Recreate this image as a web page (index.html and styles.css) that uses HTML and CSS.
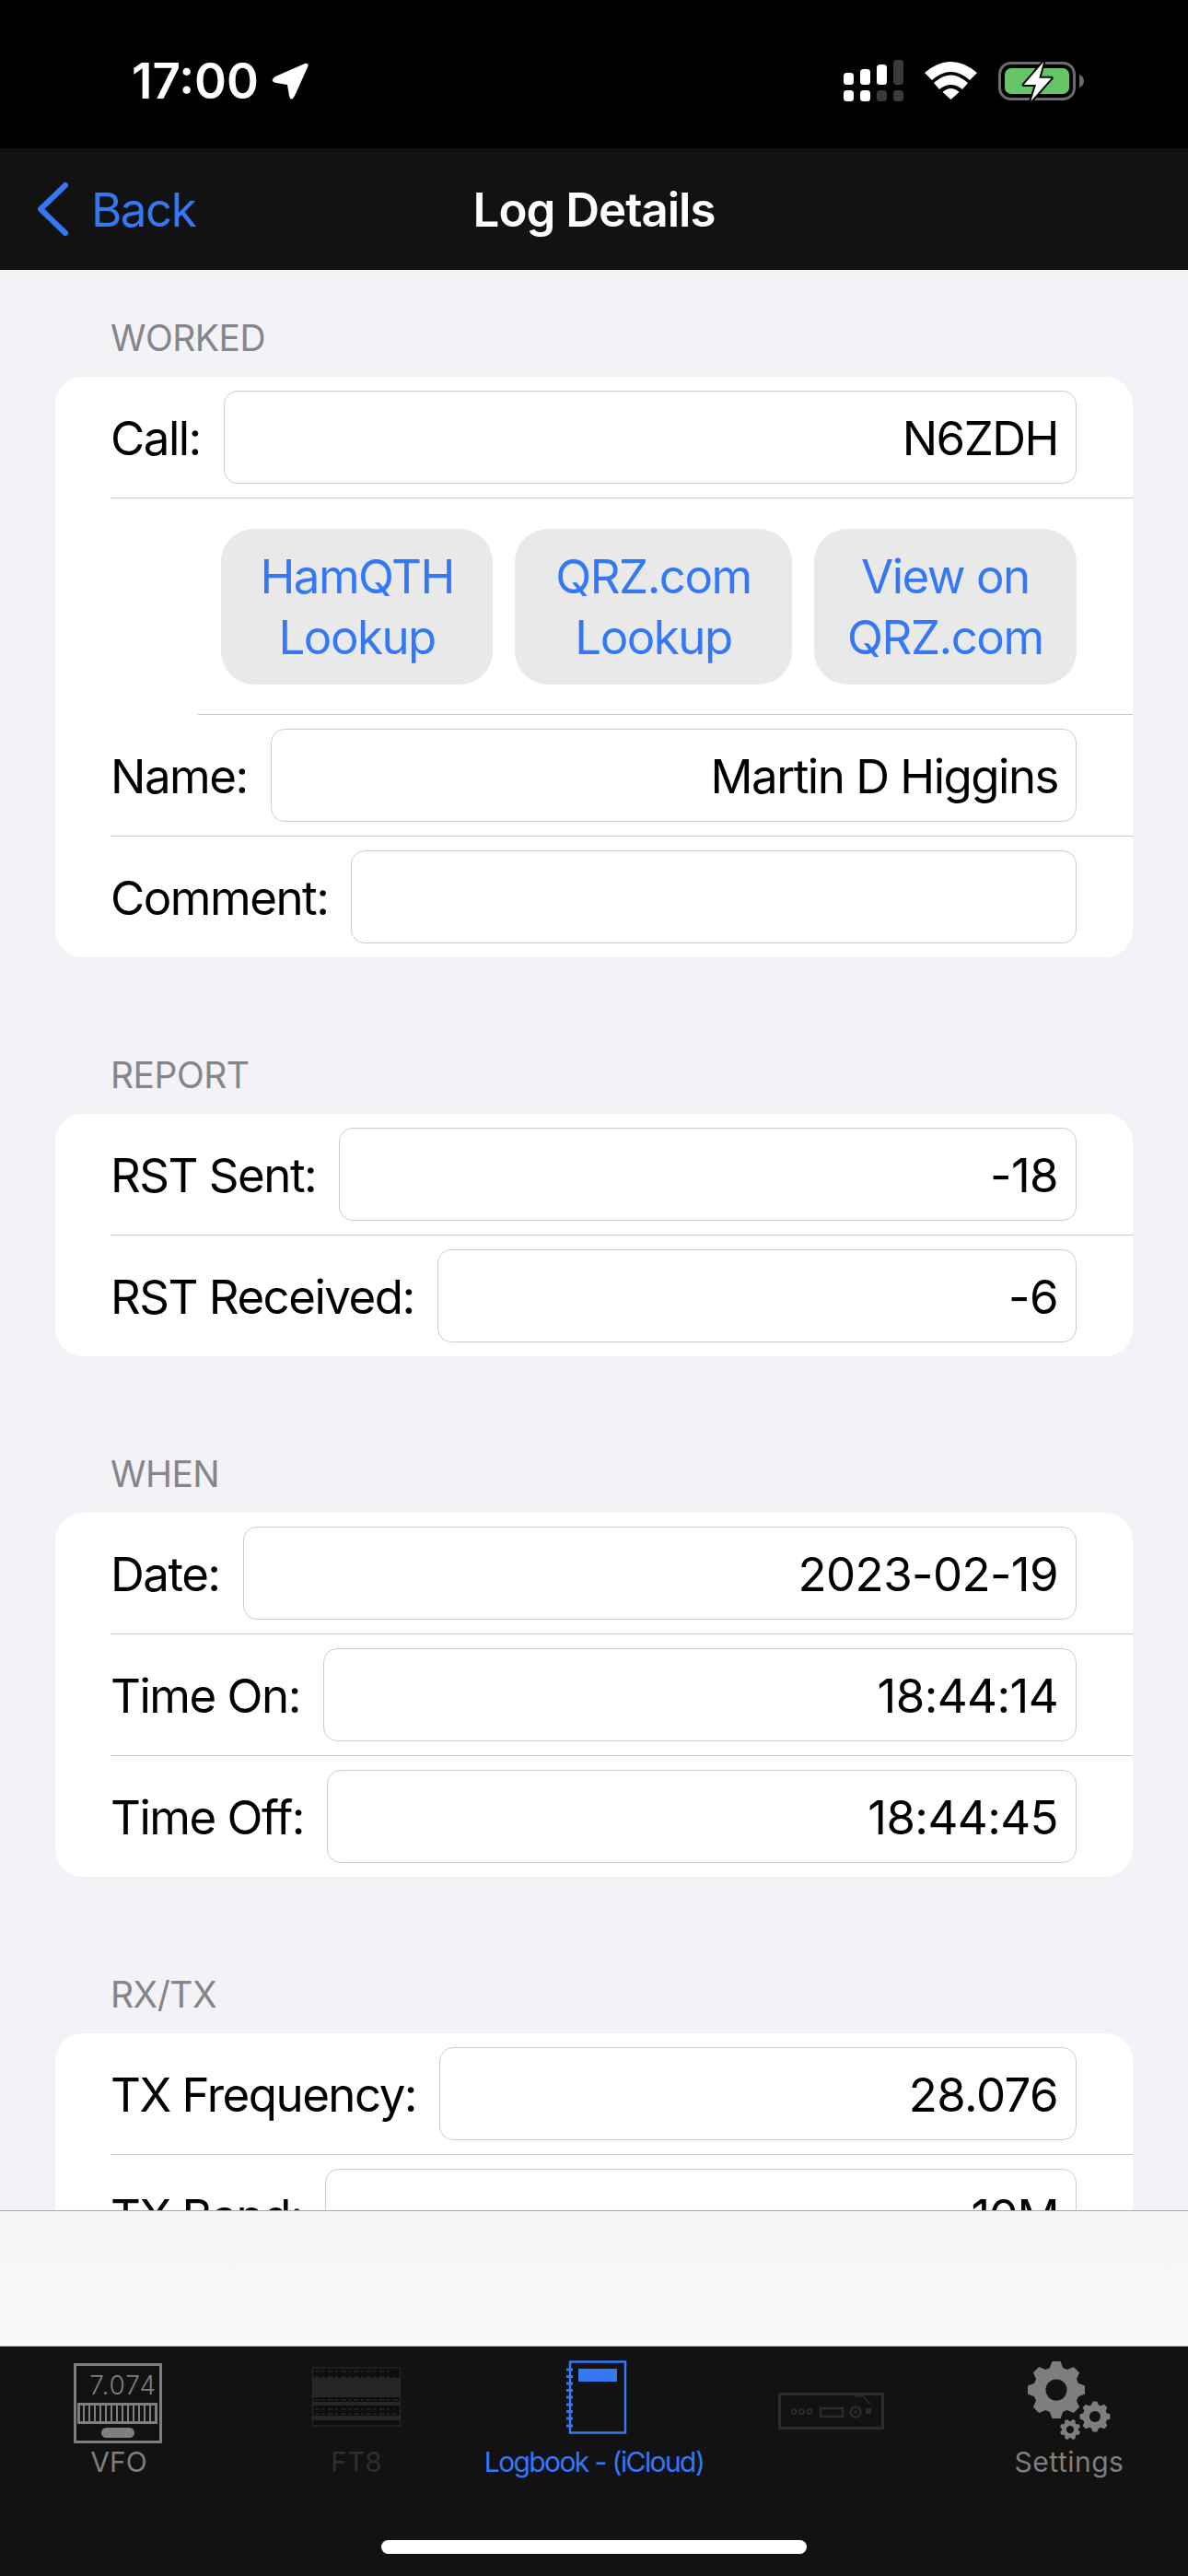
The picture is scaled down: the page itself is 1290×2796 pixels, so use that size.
FILE: index.html
```html
<!DOCTYPE html>
<html lang="en">
<head>
<meta charset="utf-8">
<title>Log Details</title>
<link rel="stylesheet" href="styles.css">
</head>
<body>
<div class="app">
  <header class="status">
    <span class="time">17:00</span>
    <svg class="arrow" width="40" height="40" viewBox="0 0 40 40"><path d="M36 1Q41 0 39 5L25 36Q21 43 19 36L17 24L5 22Q-3 20 4 15Z" fill="#fff"/></svg>
    <div class="status-icons">
      <svg width="65" height="45" viewBox="0 0 65 45">
        <g fill="#fff">
          <rect x="0" y="14" width="11" height="13" rx="3.5"/><rect x="18" y="10" width="11" height="17" rx="3.5"/><rect x="36" y="5" width="11" height="22" rx="3.5"/>
          <rect x="0" y="33" width="11" height="12" rx="3.5"/><rect x="18" y="33" width="11" height="12" rx="3.5"/>
        </g>
        <g fill="#3a3a3a">
          <rect x="54" y="0" width="11" height="27" rx="3.5"/><rect x="36" y="33" width="11" height="12" rx="3.5"/><rect x="54" y="33" width="11" height="12" rx="3.5"/>
        </g>
      </svg>
      <svg width="57" height="41" viewBox="0 0 57 41" fill="#fff">
        <path d="M0 12Q28.500 -12 57 12L49 20Q28.500 2 8 20Z"/>
        <path d="M10 23Q28.500 6 47 23L41 30Q28.500 20 16 30Z"/>
        <path d="M19.500 33Q28.500 25 37.500 33L28.500 41Z"/>
      </svg>
      <svg width="93" height="46" viewBox="0 0 93 46">
        <rect x="1.500" y="3.500" width="81" height="39" rx="12" fill="none" stroke="#6b6b6b" stroke-width="3"/>
        <rect x="7" y="9" width="70" height="28" rx="7" fill="#65c466"/>
        <path d="M88 16Q93 18 93 23Q93 28 88 30Z" fill="#6b6b6b"/>
        <path d="M49.300 2L27.700 27H41L35.300 45L57.700 19.700H44.300Z" fill="#fff" stroke="#000" stroke-width="4" paint-order="stroke" stroke-linejoin="round"/>
      </svg>
    </div>
  </header>

  <nav class="navbar">
    <div class="back">
      <svg width="36" height="60" viewBox="0 0 36 60"><path d="M31 4L4 30L31 56" fill="none" stroke="#3478f6" stroke-width="6" stroke-linecap="round" stroke-linejoin="round"/></svg>
      <span>Back</span>
    </div>
    <div class="title">Log Details</div>
  </nav>

  <main class="scroll">
    <section class="section">
      <h2 class="section-head">WORKED</h2>
      <div class="card">
        <div class="row"><span class="label">Call:</span><div class="field">N6ZDH</div></div>
        <div class="row row-buttons">
          <div class="btn">HamQTH<br>Lookup</div>
          <div class="btn">QRZ.com<br>Lookup</div>
          <div class="btn">View on<br>QRZ.com</div>
        </div>
        <div class="row"><span class="label">Name:</span><div class="field">Martin D Higgins</div></div>
        <div class="row"><span class="label">Comment:</span><div class="field"></div></div>
      </div>
    </section>
    <section class="section">
      <h2 class="section-head">REPORT</h2>
      <div class="card">
        <div class="row"><span class="label">RST Sent:</span><div class="field field-num">-18</div></div>
        <div class="row"><span class="label">RST Received:</span><div class="field field-num">-6</div></div>
      </div>
    </section>
    <section class="section">
      <h2 class="section-head">WHEN</h2>
      <div class="card">
        <div class="row"><span class="label">Date:</span><div class="field field-num">2023-02-19</div></div>
        <div class="row"><span class="label">Time On:</span><div class="field field-num">18:44:14</div></div>
        <div class="row"><span class="label">Time Off:</span><div class="field field-num">18:44:45</div></div>
      </div>
    </section>
    <section class="section">
      <h2 class="section-head">RX/TX</h2>
      <div class="card">
        <div class="row"><span class="label">TX Frequency:</span><div class="field field-num">28.076</div></div>
        <div class="row"><span class="label">TX Band:</span><div class="field">10M</div></div>
      </div>
    </section>
  </main>

  <div class="banner"></div>

  <footer class="tabbar">
    <div class="tabs">
      <div class="tab tab-vfo">
        <svg width="130" height="98" viewBox="64 2556 130 98">
          <g fill="none" stroke="#7e7e7e" stroke-width="3">
            <rect x="81.500" y="2566.500" width="93" height="84"/>
            <rect x="85.500" y="2609.500" width="84" height="20"/>
            <path d="M91 2611V2628M97 2611V2628M103 2611V2628M109 2611V2628M115 2611V2628M121 2611V2628M127 2611V2628M133 2611V2628M139 2611V2628M145 2611V2628M151 2611V2628M157 2611V2628M163 2611V2628" stroke-width="2"/>
          </g>
          <text class="vfo-digits" x="170" y="2599" text-anchor="end">7.074</text>
          <rect x="110" y="2635" width="36" height="11" rx="5.500" fill="#7e7e7e"/>
        </svg>
        <span class="tab-label">VFO</span>
      </div>
      <div class="tab tab-ft8">
        <svg width="130" height="98" viewBox="322 2556 130 98">
          <rect x="339.500" y="2570" width="95" height="63" fill="#0e0e0e" stroke="#262626" stroke-width="1.500"/>
          <g fill="#262626">
            <rect x="340" y="2581" width="94" height="21"/>
            <rect x="340" y="2607" width="94" height="4"/>
            <rect x="340" y="2622" width="94" height="5"/>
          </g>
          <g fill="none" stroke="#262626" stroke-width="1.500" stroke-dasharray="6 2 3 3">
            <path d="M342 2574H424M342 2580H428M342 2605H432M342 2615H428M342 2620H430"/>
          </g>
        </svg>
        <span class="tab-label tab-label-dim">FT8</span>
      </div>
      <div class="tab tab-log">
        <svg width="130" height="98" viewBox="580 2556 130 98">
          <rect x="619" y="2563.500" width="60" height="77" fill="none" stroke="#3478f6" stroke-width="2.500"/>
          <rect x="628" y="2571" width="42" height="14" fill="#3478f6"/>
          <path d="M615 2572H622M615 2579.500H622M615 2587H622M615 2594.500H622M615 2602H622M615 2610H622M615 2617.500H622M615 2625H622M615 2633H622" stroke="#3478f6" stroke-width="3"/>
        </svg>
        <span class="tab-label tab-label-on">Logbook - (iCloud)</span>
      </div>
      <div class="tab tab-radio">
        <svg width="130" height="98" viewBox="838 2556 130 98">
          <g fill="none" stroke="#2b2b2b">
            <rect x="846.500" y="2598.500" width="112" height="37" stroke-width="3"/>
            <circle cx="862" cy="2617.500" r="2.500" stroke-width="1.800"/>
            <circle cx="870.500" cy="2617.500" r="2.500" stroke-width="1.800"/>
            <circle cx="879" cy="2617.500" r="2.500" stroke-width="1.800"/>
            <rect x="891" y="2614" width="24" height="9" stroke-width="2.500"/>
            <circle cx="929" cy="2618" r="5.500" stroke-width="2.500"/>
            <path d="M928 2601H938L943 2608H946" stroke-width="1.500"/>
          </g>
          <circle cx="929" cy="2618" r="2" fill="#2b2b2b"/>
          <rect x="940" y="2614" width="6" height="6" fill="#2b2b2b"/>
        </svg>
        <span class="tab-label"></span>
      </div>
      <div class="tab tab-settings">
        <svg width="130" height="98" viewBox="1096 2556 130 98">
          <defs>
            <g id="gear-tooth"><polygon points="-8,-22 -4.500,-31 4.500,-31 8,-22"/></g>
            <g id="gear">
              <circle r="25"/>
              <use href="#gear-tooth"/>
              <use href="#gear-tooth" transform="rotate(45)"/>
              <use href="#gear-tooth" transform="rotate(90)"/>
              <use href="#gear-tooth" transform="rotate(135)"/>
              <use href="#gear-tooth" transform="rotate(180)"/>
              <use href="#gear-tooth" transform="rotate(225)"/>
              <use href="#gear-tooth" transform="rotate(270)"/>
              <use href="#gear-tooth" transform="rotate(315)"/>
              <circle r="11.500" fill="#121212"/>
            </g>
          </defs>
          <g fill="#7e7e7e">
            <use href="#gear" transform="translate(1147 2594)"/>
            <circle cx="1189" cy="2623" r="18.500" fill="#121212"/>
            <circle cx="1162" cy="2637" r="13" fill="#121212"/>
            <use href="#gear" transform="translate(1189 2623) scale(.53)"/>
            <use href="#gear" transform="translate(1162 2637) rotate(22) scale(.36)"/>
          </g>
        </svg>
        <span class="tab-label tab-label-wide">Settings</span>
      </div>
    </div>
    <div class="home-indicator"></div>
  </footer>
</div>
</body>
</html>
```

FILE: styles.css
```css
* { box-sizing: border-box; }
html, body { margin: 0; padding: 0; }
body {
  font-family: Inter, "Noto Sans", "Liberation Sans", sans-serif;
  background: #000;
}
.app {
  width: 1290px;
  height: 2796px;
  display: flex;
  flex-direction: column;
  overflow: hidden;
}
svg { display: block; flex: none; }

/* status bar */
.status {
  height: 161px;
  background: #000;
  color: #fff;
  display: flex;
  align-items: center;
  padding: 14px 113px 0 143px;
}
.time { font-size: 53px; font-weight: 600; letter-spacing: 0; line-height: 60px; }
.arrow { margin-left: 14px; }
.status-icons { margin-left: auto; display: flex; align-items: center; gap: 23px; }

/* nav bar */
.navbar {
  height: 132px;
  background: #121212;
  display: grid;
  grid-template-columns: 1fr auto 1fr;
  align-items: center;
}
.back {
  display: flex;
  align-items: center;
  gap: 23px;
  padding-left: 40px;
  color: #3478f6;
  font-size: 51px;
  letter-spacing: -1.5px;
}
.title {
  color: #fff;
  font-size: 51px;
  font-weight: 600;
  letter-spacing: -1px;
}

/* scrolling form */
.scroll {
  flex: 1;
  min-height: 0;
  overflow: hidden;
  background: #f2f2f7;
  padding-top: 50px;
}
.section { margin-bottom: 104px; }
.section-head {
  margin: 0 0 18px 120px;
  font-size: 39px;
  font-weight: 400;
  line-height: 48px;
  letter-spacing: -0.5px;
  color: #85858a;
}
.card {
  margin: 0 60px;
  background: #fff;
  border-radius: 30px;
  overflow: hidden;
}
.row {
  margin-left: 60px;
  padding: 15px 61px 15px 0;
  display: flex;
  align-items: center;
  gap: 25px;
  border-bottom: 1px solid #c6c6c8;
  font-size: 51px;
  letter-spacing: -1.5px;
  color: #000;
}
.row:last-child { border-bottom: 0; }
.label { white-space: nowrap; padding-top: 2px; }
.field {
  flex: 1;
  min-width: 0;
  height: 101px;
  line-height: 101px;
  padding: 0 19px;
  text-align: right;
  border: 1px solid #cdcdcf;
  border-radius: 15px;
}
.field-num { letter-spacing: -0.6px; }
.row-buttons {
  margin-left: 155px;
  padding: 33px 61px 32px 25px;
  display: grid;
  grid-template-columns: 295fr 300fr 285fr;
  gap: 24px;
}
.btn {
  height: 169px;
  background: #e9e9ea;
  border-radius: 36px;
  color: #3478f6;
  line-height: 66px;
  text-align: center;
  display: flex;
  align-items: center;
  justify-content: center;
}

/* empty banner above the tab bar */
.banner {
  height: 148px;
  border-top: 1px solid #a9a9ae;
  border-bottom: 1px solid #b4b4b4;
  background: linear-gradient(#f5f5f5, #f9f9f9);
}

/* tab bar */
.tabbar {
  height: 249px;
  background: #121212;
  padding-top: 9px;
  display: flex;
  flex-direction: column;
}
.tabs { display: flex; }
.tab {
  flex: 1;
  display: flex;
  flex-direction: column;
  align-items: center;
}
.tab-label {
  height: 36px;
  line-height: 36px;
  font-size: 30px;
  color: #7e7e7e;
  white-space: nowrap;
}
.tab-label-dim { color: #2e2e2e; }
.tab-label-on { color: #3478f6; letter-spacing: -1.6px; }
.tab-label-wide { letter-spacing: 0.5px; }
.vfo-digits { font-size: 28px; font-weight: 300; letter-spacing: 1px; fill: #7e7e7e; font-family: Inter, sans-serif; }
.home-indicator {
  align-self: center;
  width: 462px;
  height: 15px;
  margin-top: 67px;
  background: #fff;
  border-radius: 8px;
}
```
